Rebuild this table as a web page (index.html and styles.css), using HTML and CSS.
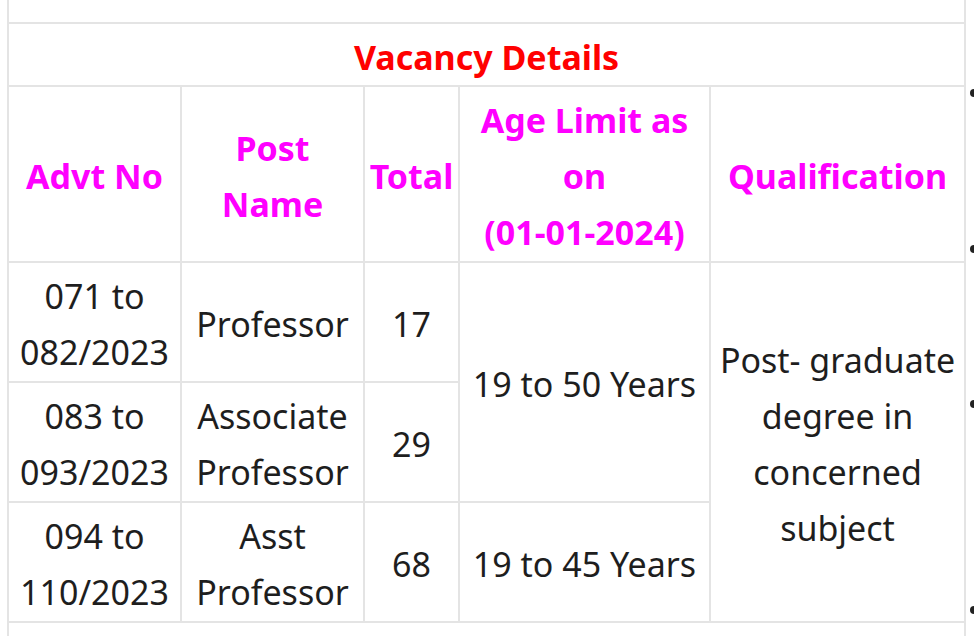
FILE: index.html
```html
<!DOCTYPE html>
<html lang="en">
<head>
<meta charset="utf-8">
<title>Vacancy Details</title>
<link rel="stylesheet" href="styles.css">
</head>
<body>
<div class="page">
  <table class="vacancy">
    <colgroup>
      <col class="c1"><col class="c2"><col class="c3"><col class="c4"><col class="c5">
    </colgroup>
    <tbody>
      <tr class="prev-row"><td colspan="5"></td></tr>
      <tr class="title-row"><th colspan="5" class="title">Vacancy Details</th></tr>
      <tr class="head-row">
        <th>Advt No</th>
        <th>Post<br>Name</th>
        <th>Total</th>
        <th>Age Limit as<br>on<br>(01-01-2024)</th>
        <th>Qualification</th>
      </tr>
      <tr class="data-row">
        <td>071 to<br>082/2023</td>
        <td>Professor</td>
        <td>17</td>
        <td rowspan="2">19 to 50 Years</td>
        <td rowspan="3">Post- graduate<br>degree in<br>concerned<br>subject</td>
      </tr>
      <tr class="data-row">
        <td>083 to<br>093/2023</td>
        <td>Associate<br>Professor</td>
        <td>29</td>
      </tr>
      <tr class="data-row">
        <td>094 to<br>110/2023</td>
        <td>Asst<br>Professor</td>
        <td>68</td>
        <td>19 to 45 Years</td>
      </tr>
      <tr class="next-row"><td colspan="5"></td></tr>
    </tbody>
  </table>
  <ul class="side-list">
    <li class="side-item i1"></li>
    <li class="side-item i2"></li>
    <li class="side-item i3"></li>
    <li class="side-item i4"></li>
  </ul>
</div>
</body>
</html>
```
FILE: styles.css
```css
html, body {
  margin: 0;
  padding: 0;
  background: #ffffff;
  overflow: hidden;
}
body {
  font-family: "Noto Sans", "Open Sans", sans-serif;
  color: #1e1e1e;
}
.page {
  display: flex;
  align-items: flex-start;
  padding-left: 7px;
}
.vacancy {
  border-collapse: collapse;
  table-layout: fixed;
  width: 957px;
  flex: none;
  font-size: 34px;
  line-height: 56px;
}
.c1 { width: 173px; }
.c2 { width: 183px; }
.c3 { width: 95px; }
.c4 { width: 251px; }
.c5 { width: 255px; }
.vacancy td,
.vacancy th {
  border: 2px solid #e4e4e4;
  padding: 5px 4px 1px;
  text-align: center;
  vertical-align: middle;
  white-space: nowrap;
}
.vacancy th {
  color: #ff00ff;
  font-weight: 700;
}
.vacancy th.title {
  color: #ff0000;
  padding: 5px 4px 0;
}
.vacancy .prev-row td {
  border-top: none;
  height: 22px;
  padding: 0;
}
.vacancy .next-row td {
  border-bottom: none;
  height: 40px;
  padding: 0;
}
.side-list {
  list-style: none;
  margin: 0 0 0 4px;
  padding: 89px 0 0 0;
  display: flex;
  flex-direction: column;
}
.side-item {
  display: block;
}
.side-item::before {
  content: "";
  display: block;
  width: 8px;
  height: 8px;
  border-radius: 50%;
  background: #222222;
}
.i1 { height: 156px; }
.i2 { height: 155px; }
.i3 { height: 206px; }
.i4 { height: 20px; }
```
